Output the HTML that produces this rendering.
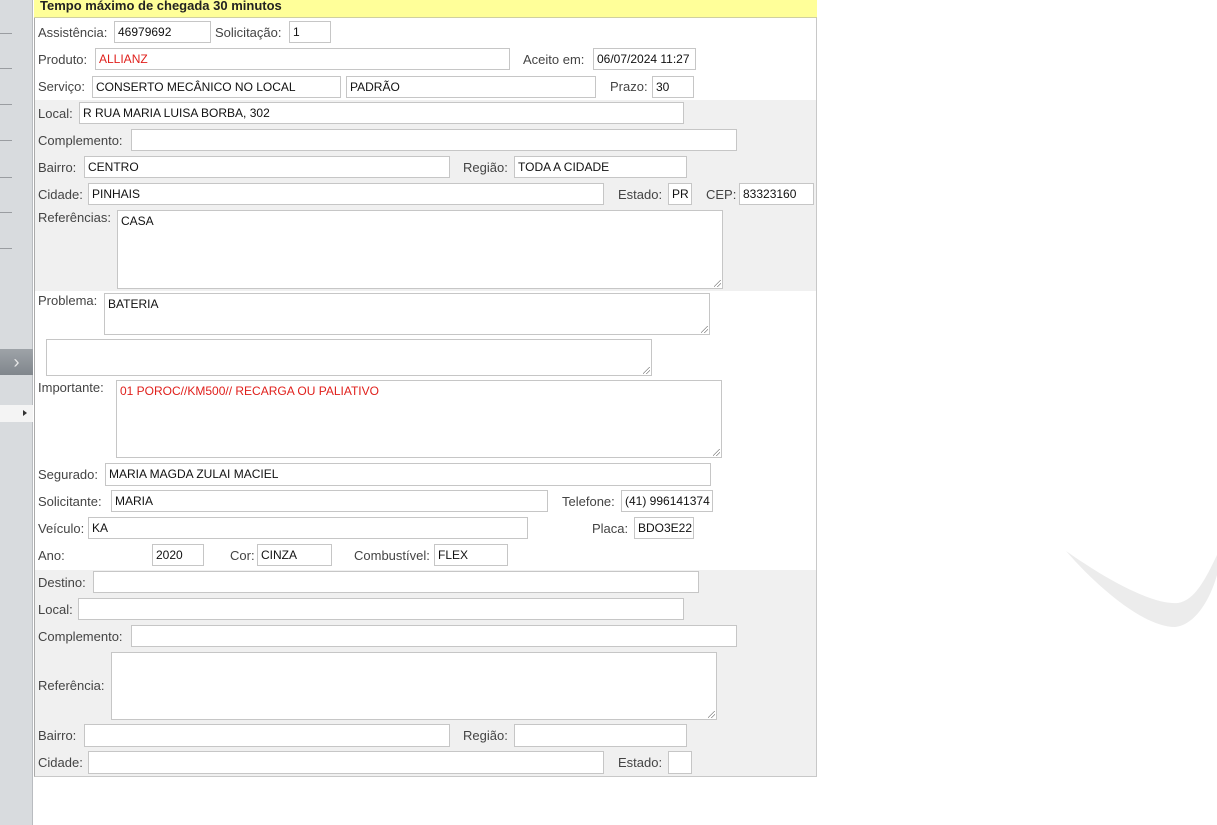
<!DOCTYPE html>
<html><head><meta charset="utf-8"><style>
*{box-sizing:border-box;margin:0;padding:0}
body{width:1217px;height:825px;background:#fff;position:relative;overflow:hidden;font-family:"Liberation Sans",sans-serif;}
.sb{position:absolute;left:0;top:0;width:33px;height:825px;background:#d8dbde;border-right:1px solid #b9bcc0}
.ln{position:absolute;left:0;width:12px;height:1px;background:#9a9da1}
.panel{position:absolute;left:34px;top:0;width:783px;height:777px;border:1px solid #c8c8c8;border-top:none;border-left:1px solid #aaa}
.hdr{position:absolute;left:34px;top:0;width:783px;height:18px;background:#ffff99;border-bottom:1px solid #d0d0a0;font-weight:bold;font-size:13px;padding-left:6px;line-height:11px;color:#222;overflow:hidden}
.g{position:absolute;left:35px;width:781px;background:#f0f0f0}
.l{position:absolute;font-size:13px;color:#444;line-height:16px;white-space:nowrap}
.i{position:absolute;background:#fff;border:1px solid #c6c6c6;font-size:12px;color:#111;padding:3px 0 0 3px;white-space:nowrap;overflow:hidden;line-height:14px}
.r{color:#e0201c}
.ta::after{content:"";position:absolute;right:1px;bottom:1px;width:7px;height:7px;background:linear-gradient(135deg,transparent 45%,#888 46%,#888 52%,transparent 53%,transparent 70%,#888 71%,#888 77%,transparent 78%)}
</style></head><body>
<div class="sb"></div>
<div class="ln" style="top:33px"></div><div class="ln" style="top:68px"></div><div class="ln" style="top:104px"></div><div class="ln" style="top:140px"></div><div class="ln" style="top:177px"></div><div class="ln" style="top:212px"></div><div class="ln" style="top:248px"></div>
<div style="position:absolute;left:0;top:349px;width:33px;height:26px;background:linear-gradient(#9ea3a8,#80868c);color:#e8e8e8;font-size:18px;text-align:center;line-height:26px">›</div>
<div style="position:absolute;left:0;top:405px;width:33px;height:17px;background:#f4f4f4"><div style="position:absolute;left:23px;top:5px;border-left:4px solid #333;border-top:3.5px solid transparent;border-bottom:3.5px solid transparent"></div></div>
<div class="panel"></div>
<div class="g" style="top:100px;height:191px"></div>
<div class="g" style="top:570px;height:206px"></div>
<div class="hdr">Tempo máximo de chegada 30 minutos</div>

<div class="l" style="left:38px;top:25px">Assistência:</div><div class="i" style="left:114px;top:21px;width:97px;height:22px">46979692</div>
<div class="l" style="left:215px;top:25px">Solicitação:</div><div class="i" style="left:289px;top:21px;width:42px;height:22px">1</div>
<div class="l" style="left:38px;top:52px">Produto:</div><div class="i r" style="left:95px;top:48px;width:415px;height:22px">ALLIANZ</div>
<div class="l" style="left:523px;top:52px">Aceito em:</div><div class="i" style="left:593px;top:48px;width:103px;height:22px">06/07/2024 11:27</div>
<div class="l" style="left:38px;top:79px">Serviço:</div><div class="i" style="left:92px;top:76px;width:249px;height:22px">CONSERTO MECÂNICO NO LOCAL</div>
<div class="i" style="left:346px;top:76px;width:250px;height:22px">PADRÃO</div>
<div class="l" style="left:610px;top:79px">Prazo:</div><div class="i" style="left:652px;top:76px;width:42px;height:22px">30</div>
<div class="l" style="left:38px;top:106px">Local:</div><div class="i" style="left:79px;top:102px;width:605px;height:22px">R RUA MARIA LUISA BORBA, 302</div>
<div class="l" style="left:38px;top:133px">Complemento:</div><div class="i" style="left:131px;top:129px;width:606px;height:22px"></div>
<div class="l" style="left:38px;top:160px">Bairro:</div><div class="i" style="left:84px;top:156px;width:366px;height:22px">CENTRO</div>
<div class="l" style="left:463px;top:160px">Região:</div><div class="i" style="left:514px;top:156px;width:173px;height:22px">TODA A CIDADE</div>
<div class="l" style="left:38px;top:187px">Cidade:</div><div class="i" style="left:88px;top:183px;width:516px;height:22px">PINHAIS</div>
<div class="l" style="left:618px;top:187px">Estado:</div><div class="i" style="left:668px;top:183px;width:24px;height:22px">PR</div>
<div class="l" style="left:706px;top:187px">CEP:</div><div class="i" style="left:739px;top:183px;width:75px;height:22px">83323160</div>
<div class="l" style="left:38px;top:210px">Referências:</div><div class="i ta" style="left:117px;top:210px;width:606px;height:79px">CASA</div>
<div class="l" style="left:38px;top:293px">Problema:</div><div class="i ta" style="left:104px;top:293px;width:606px;height:42px">BATERIA</div>
<div class="i ta" style="left:46px;top:339px;width:606px;height:37px"></div>
<div class="l" style="left:38px;top:380px">Importante:</div><div class="i ta r" style="left:116px;top:380px;width:606px;height:78px">01 POROC//KM500// RECARGA OU PALIATIVO</div>
<div class="l" style="left:38px;top:467px">Segurado:</div><div class="i" style="left:105px;top:463px;width:606px;height:23px">MARIA MAGDA ZULAI MACIEL</div>
<div class="l" style="left:38px;top:494px">Solicitante:</div><div class="i" style="left:111px;top:490px;width:437px;height:22px">MARIA</div>
<div class="l" style="left:562px;top:494px">Telefone:</div><div class="i" style="left:621px;top:490px;width:92px;height:22px">(41) 996141374</div>
<div class="l" style="left:38px;top:521px">Veículo:</div><div class="i" style="left:88px;top:517px;width:440px;height:22px">KA</div>
<div class="l" style="left:592px;top:521px">Placa:</div><div class="i" style="left:634px;top:517px;width:60px;height:22px">BDO3E22</div>
<div class="l" style="left:38px;top:548px">Ano:</div><div class="i" style="left:152px;top:544px;width:52px;height:22px">2020</div>
<div class="l" style="left:230px;top:548px">Cor:</div><div class="i" style="left:257px;top:544px;width:75px;height:22px">CINZA</div>
<div class="l" style="left:354px;top:548px">Combustível:</div><div class="i" style="left:434px;top:544px;width:74px;height:22px">FLEX</div>
<div class="l" style="left:38px;top:575px">Destino:</div><div class="i" style="left:93px;top:571px;width:606px;height:22px"></div>
<div class="l" style="left:38px;top:602px">Local:</div><div class="i" style="left:78px;top:598px;width:606px;height:22px"></div>
<div class="l" style="left:38px;top:629px">Complemento:</div><div class="i" style="left:131px;top:625px;width:606px;height:22px"></div>
<div class="l" style="left:38px;top:678px">Referência:</div><div class="i ta" style="left:111px;top:652px;width:606px;height:68px"></div>
<div class="l" style="left:38px;top:728px">Bairro:</div><div class="i" style="left:84px;top:724px;width:366px;height:23px"></div>
<div class="l" style="left:463px;top:728px">Região:</div><div class="i" style="left:514px;top:724px;width:173px;height:23px"></div>
<div class="l" style="left:38px;top:755px">Cidade:</div><div class="i" style="left:88px;top:751px;width:516px;height:23px"></div>
<div class="l" style="left:618px;top:755px">Estado:</div><div class="i" style="left:668px;top:751px;width:24px;height:23px"></div>
<svg style="position:absolute;left:1060px;top:545px" width="157" height="90" viewBox="0 0 157 90"><path d="M6 6 C40 30 90 60 118 58 C135 55 145 35 157 10 L157 30 C150 55 135 80 115 82 C85 82 40 45 6 6Z" fill="#ececec"/></svg>
</body></html>
